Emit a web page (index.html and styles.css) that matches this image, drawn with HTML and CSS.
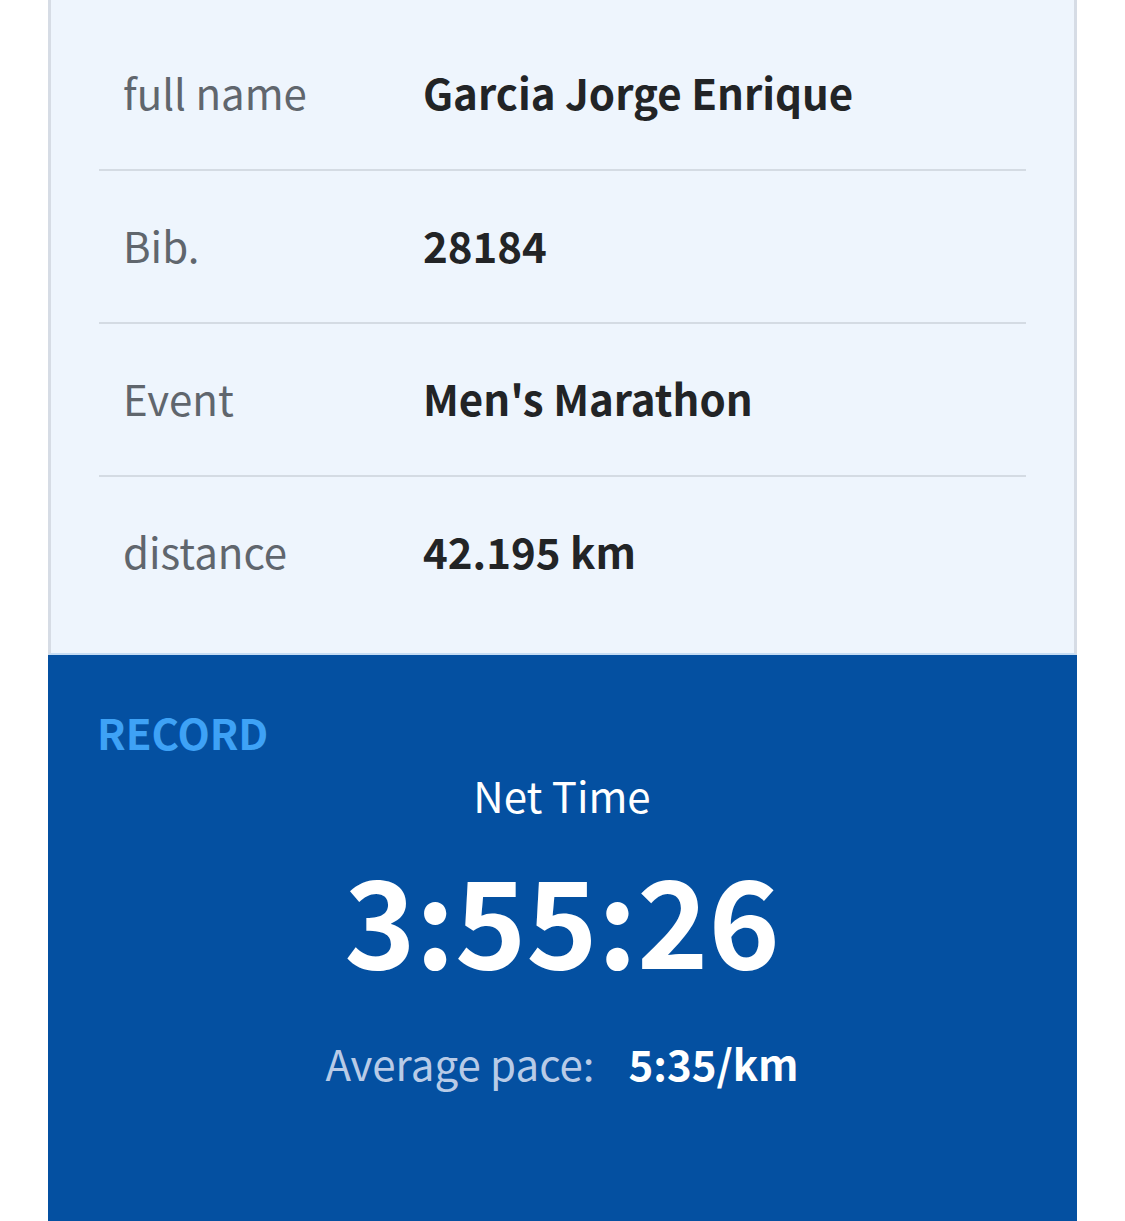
FILE: index.html
```html
<!DOCTYPE html>
<html>
	<head>
		<meta charset="UTF-8">
		<meta name="viewport" content="width=device-width, initial-scale=1.0">
		<title>Result</title>
		<link rel="stylesheet" href="styles.css">
	</head>
	<body>
		<div class="card">
			<div class="info">
				<div class="row">
					<span class="label">full name</span>
					<span class="value">Garcia Jorge Enrique</span>
				</div>
				<div class="row">
					<span class="label">Bib.</span>
					<span class="value">28184</span>
				</div>
				<div class="row">
					<span class="label">Event</span>
					<span class="value">Men's Marathon</span>
				</div>
				<div class="row">
					<span class="label">distance</span>
					<span class="value">42.195 km</span>
				</div>
			</div>

			<div class="record">
				<h2>RECORD</h2>
				<p class="net">Net Time</p>
				<p class="time">3:55:26</p>
				<p class="pace"><span class="pace-label">Average pace:</span><span class="pace-value">5:35/km</span></p>
			</div>
		</div>
	</body>
</html>
```

FILE: styles.css
```css
body {
	margin: 0;
	padding: 0;
	background-color: #ffffff;
	font-family: "Noto Sans CJK SC", "Noto Sans", sans-serif;
	overflow: hidden;
}

.card {
	width: 1029px;
	margin-left: 48px;
	box-sizing: border-box;
}

.info {
	background-color: #eef5fd;
	border-left: 3px solid #d6dce5;
	border-right: 3px solid #d6dce5;
	border-bottom: 2px solid #c6ddf4;
	padding: 18px 48px 25px 48px;
}

.row {
	display: flex;
	align-items: center;
	height: 147px;
	padding-bottom: 4px;
	border-bottom: 2px solid #d4dbe3;
}

.row:last-child {
	border-bottom: none;
}

.label {
	width: 300px;
	padding-left: 24px;
	font-size: 42px;
	color: #60666d;
}

.value {
	font-size: 42px;
	font-weight: bold;
	color: #222426;
}

.record {
	background-color: #0450a1;
	height: 566px;
	padding: 53px 50px 0 49px;
	box-sizing: border-box;
	text-align: center;
	color: #ffffff;
}

.record h2 {
	margin: 0;
	text-align: left;
	font-size: 42px;
	font-weight: bold;
	color: #3ea2f6;
	line-height: 48px;
}

.net {
	margin: 14px 0 0 0;
	font-size: 42px;
	line-height: 50px;
}

.time {
	margin: 32px 0 0 0;
	font-size: 121px;
	font-weight: bold;
	line-height: 130px;
}

.pace {
	margin: 56px 0 0 0;
	font-size: 42px;
	line-height: 50px;
}

.pace-label {
	color: #b8cbe7;
	margin-right: 34px;
}

.pace-value {
	font-weight: bold;
}
```
